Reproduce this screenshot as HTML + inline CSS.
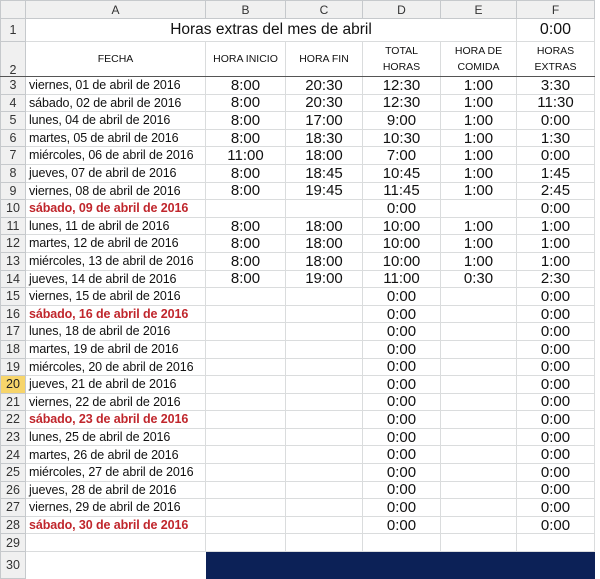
<!DOCTYPE html>
<html><head><meta charset="utf-8"><style>
body{margin:0;width:600px;height:579px;overflow:hidden;background:#fff;font-family:"Liberation Sans",sans-serif}
table{position:absolute;left:0;top:0;border-collapse:collapse;table-layout:fixed;width:594px}
td{border:1px solid #dadcdd;padding:0;overflow:hidden;white-space:nowrap;text-align:center;font-size:15px;color:#111;line-height:1}
td.h{background:#f0f0f0;color:#333;font-size:12px;border-color:#c6c9cc}
td.rh{background:#f0f0f0;color:#333;font-size:12.5px;border-color:#c6c9cc;text-align:center}
td.rh.sel{background:#f7d56b;color:#222}
td.a{text-align:left;font-size:12.5px;padding-left:3px;letter-spacing:-0.1px}
td.r{color:#c0262c;font-weight:bold}
td.hd{font-size:10.5px;line-height:16px;vertical-align:bottom;padding-bottom:1px}
tr.row2 td{border-bottom:1px solid #555}
tr.d td{height:16.6px}
td.nv{background:#0c2157;border-color:#0c2157}
</style></head><body>
<table>
<colgroup><col style="width:25px"><col style="width:180px"><col style="width:80px"><col style="width:77px"><col style="width:78px"><col style="width:76px"><col style="width:78px"></colgroup>
<tr><td class="h" style="height:17px"></td><td class="h">A</td><td class="h">B</td><td class="h">C</td><td class="h">D</td><td class="h">E</td><td class="h">F</td></tr>
<tr><td class="rh" style="height:22px">1</td><td colspan="5" style="font-size:15.5px">Horas extras del mes de abril</td><td style="font-size:16px">0:00</td></tr>
<tr class="row2"><td class="rh" style="vertical-align:bottom;height:34px">2</td><td class="hd" style="vertical-align:middle">FECHA</td><td class="hd" style="vertical-align:middle">HORA INICIO</td><td class="hd" style="vertical-align:middle">HORA FIN</td><td class="hd">TOTAL<br>HORAS</td><td class="hd">HORA DE<br>COMIDA</td><td class="hd">HORAS<br>EXTRAS</td></tr>
<tr class="d"><td class="rh">3</td><td class="a">viernes, 01 de abril de 2016</td><td>8:00</td><td>20:30</td><td>12:30</td><td>1:00</td><td>3:30</td></tr>
<tr class="d"><td class="rh">4</td><td class="a">sábado, 02 de abril de 2016</td><td>8:00</td><td>20:30</td><td>12:30</td><td>1:00</td><td>11:30</td></tr>
<tr class="d"><td class="rh">5</td><td class="a">lunes, 04 de abril de 2016</td><td>8:00</td><td>17:00</td><td>9:00</td><td>1:00</td><td>0:00</td></tr>
<tr class="d"><td class="rh">6</td><td class="a">martes, 05 de abril de 2016</td><td>8:00</td><td>18:30</td><td>10:30</td><td>1:00</td><td>1:30</td></tr>
<tr class="d"><td class="rh">7</td><td class="a">miércoles, 06 de abril de 2016</td><td>11:00</td><td>18:00</td><td>7:00</td><td>1:00</td><td>0:00</td></tr>
<tr class="d"><td class="rh">8</td><td class="a">jueves, 07 de abril de 2016</td><td>8:00</td><td>18:45</td><td>10:45</td><td>1:00</td><td>1:45</td></tr>
<tr class="d"><td class="rh">9</td><td class="a">viernes, 08 de abril de 2016</td><td>8:00</td><td>19:45</td><td>11:45</td><td>1:00</td><td>2:45</td></tr>
<tr class="d"><td class="rh">10</td><td class="a r">sábado, 09 de abril de 2016</td><td></td><td></td><td>0:00</td><td></td><td>0:00</td></tr>
<tr class="d"><td class="rh">11</td><td class="a">lunes, 11 de abril de 2016</td><td>8:00</td><td>18:00</td><td>10:00</td><td>1:00</td><td>1:00</td></tr>
<tr class="d"><td class="rh">12</td><td class="a">martes, 12 de abril de 2016</td><td>8:00</td><td>18:00</td><td>10:00</td><td>1:00</td><td>1:00</td></tr>
<tr class="d"><td class="rh">13</td><td class="a">miércoles, 13 de abril de 2016</td><td>8:00</td><td>18:00</td><td>10:00</td><td>1:00</td><td>1:00</td></tr>
<tr class="d"><td class="rh">14</td><td class="a">jueves, 14 de abril de 2016</td><td>8:00</td><td>19:00</td><td>11:00</td><td>0:30</td><td>2:30</td></tr>
<tr class="d"><td class="rh">15</td><td class="a">viernes, 15 de abril de 2016</td><td></td><td></td><td>0:00</td><td></td><td>0:00</td></tr>
<tr class="d"><td class="rh">16</td><td class="a r">sábado, 16 de abril de 2016</td><td></td><td></td><td>0:00</td><td></td><td>0:00</td></tr>
<tr class="d"><td class="rh">17</td><td class="a">lunes, 18 de abril de 2016</td><td></td><td></td><td>0:00</td><td></td><td>0:00</td></tr>
<tr class="d"><td class="rh">18</td><td class="a">martes, 19 de abril de 2016</td><td></td><td></td><td>0:00</td><td></td><td>0:00</td></tr>
<tr class="d"><td class="rh">19</td><td class="a">miércoles, 20 de abril de 2016</td><td></td><td></td><td>0:00</td><td></td><td>0:00</td></tr>
<tr class="d"><td class="rh sel">20</td><td class="a">jueves, 21 de abril de 2016</td><td></td><td></td><td>0:00</td><td></td><td>0:00</td></tr>
<tr class="d"><td class="rh">21</td><td class="a">viernes, 22 de abril de 2016</td><td></td><td></td><td>0:00</td><td></td><td>0:00</td></tr>
<tr class="d"><td class="rh">22</td><td class="a r">sábado, 23 de abril de 2016</td><td></td><td></td><td>0:00</td><td></td><td>0:00</td></tr>
<tr class="d"><td class="rh">23</td><td class="a">lunes, 25 de abril de 2016</td><td></td><td></td><td>0:00</td><td></td><td>0:00</td></tr>
<tr class="d"><td class="rh">24</td><td class="a">martes, 26 de abril de 2016</td><td></td><td></td><td>0:00</td><td></td><td>0:00</td></tr>
<tr class="d"><td class="rh">25</td><td class="a">miércoles, 27 de abril de 2016</td><td></td><td></td><td>0:00</td><td></td><td>0:00</td></tr>
<tr class="d"><td class="rh">26</td><td class="a">jueves, 28 de abril de 2016</td><td></td><td></td><td>0:00</td><td></td><td>0:00</td></tr>
<tr class="d"><td class="rh">27</td><td class="a">viernes, 29 de abril de 2016</td><td></td><td></td><td>0:00</td><td></td><td>0:00</td></tr>
<tr class="d"><td class="rh">28</td><td class="a r">sábado, 30 de abril de 2016</td><td></td><td></td><td>0:00</td><td></td><td>0:00</td></tr>
<tr><td class="rh" style="height:17px">29</td><td></td><td></td><td></td><td></td><td></td><td></td></tr>
<tr><td class="rh" style="height:26px">30</td><td style="border-color:#fff"></td><td colspan="5" class="nv"></td></tr>
</table>
</body></html>
